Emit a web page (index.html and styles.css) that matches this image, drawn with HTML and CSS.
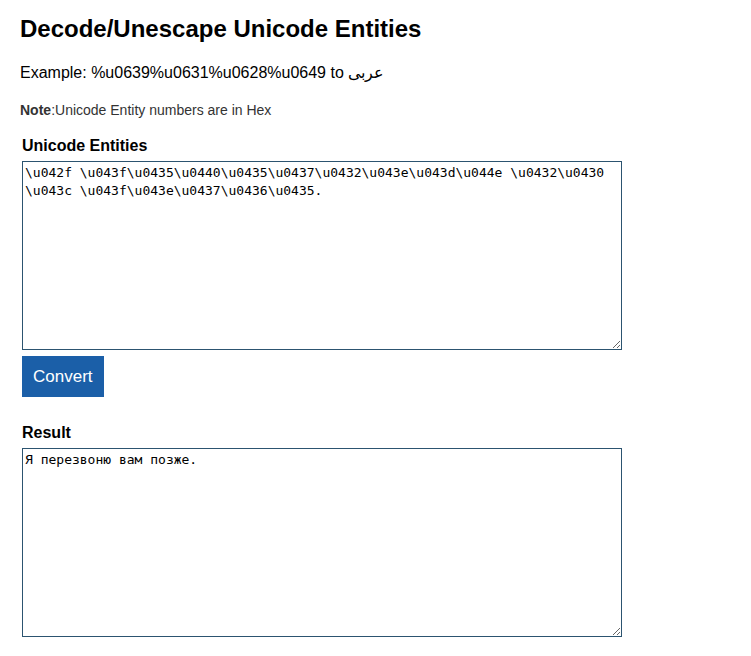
FILE: index.html
```html
<!DOCTYPE html>
<html lang="en">
<head>
    <meta charset="UTF-8">
    <meta name="viewport" content="width=device-width, initial-scale=1.0">
    <title>Decode/Unescape Unicode Entities</title>
    <link rel="stylesheet" href="styles.css">
</head>
<body>

    <h1>Decode/Unescape Unicode Entities</h1>
    <p class="example">Example: %u0639%u0631%u0628%u0649 to <span dir="rtl">عربى</span></p>
    <p class="note"><b>Note</b>:Unicode Entity numbers are in Hex</p>

    <div class="field">
        <label for="source">Unicode Entities</label>
        <textarea id="source">\u042f \u043f\u0435\u0440\u0435\u0437\u0432\u043e\u043d\u044e \u0432\u0430&#8203;\u043c \u043f\u043e\u0437\u0436\u0435.</textarea>
        <button type="button" id="convert">Convert</button>
    </div>

    <div class="field">
        <label for="result">Result</label>
        <textarea id="result">Я перезвоню вам позже.</textarea>
    </div>

</body>
</html>
```

FILE: styles.css
```css
* {
    box-sizing: border-box;
}

body {
    margin: 0;
    padding: 15px 20px;
    font-family: "Liberation Sans", Arial, sans-serif;
    color: #000;
    background: #fff;
}

h1 {
    font-size: 24px;
    font-weight: bold;
    line-height: 28px;
    margin: 0 0 21px;
}

.example {
    font-size: 16px;
    line-height: 18px;
    margin: 0 0 20px;
}

.note {
    font-size: 14px;
    line-height: 16px;
    color: #333;
    margin: 0 0 19px;
}

.field {
    padding-left: 2px;
    margin-bottom: 27px;
}

label {
    display: block;
    font-size: 16px;
    line-height: 18px;
    font-weight: bold;
    margin-bottom: 6px;
}

textarea {
    display: block;
    width: 600px;
    height: 189px;
    padding: 2px;
    border: 1px solid #2c5470;
    font-family: "DejaVu Sans Mono", monospace;
    font-size: 13px;
    line-height: 18px;
    color: #000;
}

button {
    margin-top: 6px;
    padding: 0 11px;
    height: 41px;
    background-color: #1b5fa8;
    color: #fff;
    border: none;
    font-family: "Liberation Sans", Arial, sans-serif;
    font-size: 17px;
    font-weight: 500;
    cursor: pointer;
}
```
